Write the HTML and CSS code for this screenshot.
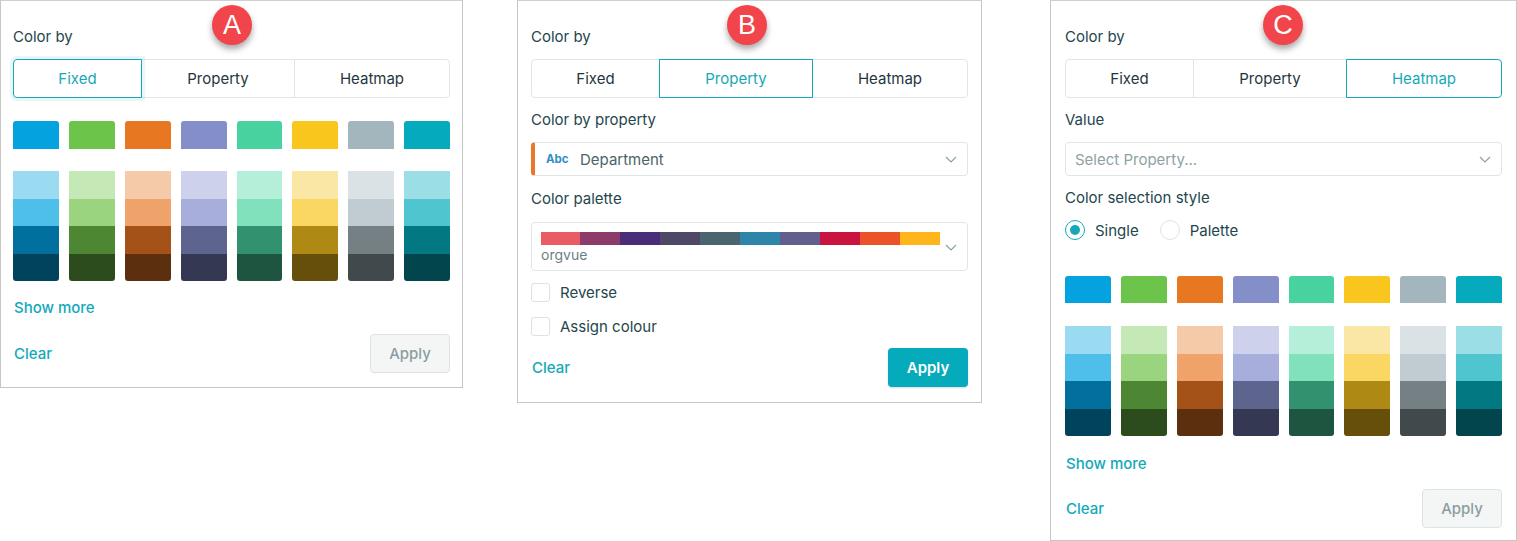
FILE: index.html
```html
<!DOCTYPE html>
<html lang="en">
<head>
<meta charset="utf-8">
<title>Color by</title>
<link rel="stylesheet" href="styles.css">
</head>
<body>
<div class="page">

  <section class="panel panel-a">
    <div class="badge">A</div>
    <div class="label">Color by</div>
    <div class="tabs">
      <div class="tab tab-first active focus">Fixed</div>
      <div class="tab">Property</div>
      <div class="tab tab-last">Heatmap</div>
    </div>
    <div class="swatch-top">
      <div class="sw" style="background:#04a3e0"></div>
      <div class="sw" style="background:#6dc44a"></div>
      <div class="sw" style="background:#e87721"></div>
      <div class="sw" style="background:#848fc9"></div>
      <div class="sw" style="background:#48d29f"></div>
      <div class="sw" style="background:#f8c61d"></div>
      <div class="sw" style="background:#a4b6bd"></div>
      <div class="sw" style="background:#05abbc"></div>
    </div>
    <div class="swatch-stacks">
      <div class="stack"><i style="background:#9bdbf2"></i><i style="background:#4ebfe8"></i><i style="background:#02709e"></i><i style="background:#01425c"></i></div>
      <div class="stack"><i style="background:#c5e8b7"></i><i style="background:#9bd47f"></i><i style="background:#4e8734"></i><i style="background:#2d4c1d"></i></div>
      <div class="stack"><i style="background:#f5caa9"></i><i style="background:#efa26a"></i><i style="background:#a45218"></i><i style="background:#5c2f0f"></i></div>
      <div class="stack"><i style="background:#cdd1eb"></i><i style="background:#a8aedb"></i><i style="background:#5d648e"></i><i style="background:#353853"></i></div>
      <div class="stack"><i style="background:#b5eed9"></i><i style="background:#80e1bc"></i><i style="background:#32926f"></i><i style="background:#1e5540"></i></div>
      <div class="stack"><i style="background:#fbe7a5"></i><i style="background:#fad663"></i><i style="background:#ae8a14"></i><i style="background:#654f0b"></i></div>
      <div class="stack"><i style="background:#dae2e5"></i><i style="background:#c0ccd1"></i><i style="background:#758085"></i><i style="background:#42494c"></i></div>
      <div class="stack"><i style="background:#9bdee5"></i><i style="background:#4fc5d0"></i><i style="background:#027883"></i><i style="background:#02454c"></i></div>
    </div>
    <div class="link more">Show more</div>
    <div class="footer">
      <span class="link">Clear</span>
      <div class="apply disabled">Apply</div>
    </div>
  </section>

  <section class="panel panel-b">
    <div class="badge">B</div>
    <div class="label">Color by</div>
    <div class="tabs">
      <div class="tab tab-first">Fixed</div>
      <div class="tab active">Property</div>
      <div class="tab tab-last">Heatmap</div>
    </div>
    <div class="label mt">Color by property</div>
    <div class="select select-prop">
      <span class="abc">Abc</span>
      <span class="select-text">Department</span>
      <svg class="chev" width="12" height="7" viewBox="0 0 12 7"><polyline points="1,1 6,6 11,1" fill="none" stroke="#8aa0a5" stroke-width="1.2"/></svg>
    </div>
    <div class="label mt2">Color palette</div>
    <div class="palette">
      <div class="palette-main">
        <div class="pbar">
          <i style="background:#e95c62"></i><i style="background:#8c3b6b"></i><i style="background:#4a2d7a"></i><i style="background:#504867"></i><i style="background:#4a6570"></i><i style="background:#2f84aa"></i><i style="background:#625f8f"></i><i style="background:#c8143f"></i><i style="background:#eb5228"></i><i style="background:#feb61c"></i>
        </div>
        <div class="pname">orgvue</div>
      </div>
      <svg class="chev" width="12" height="7" viewBox="0 0 12 7"><polyline points="1,1 6,6 11,1" fill="none" stroke="#8aa0a5" stroke-width="1.2"/></svg>
    </div>
    <div class="check first"><span class="box"></span><span>Reverse</span></div>
    <div class="check"><span class="box"></span><span>Assign colour</span></div>
    <div class="footer footer-b">
      <span class="link">Clear</span>
      <div class="apply primary">Apply</div>
    </div>
  </section>

  <section class="panel panel-c">
    <div class="badge">C</div>
    <div class="label">Color by</div>
    <div class="tabs">
      <div class="tab tab-first">Fixed</div>
      <div class="tab">Property</div>
      <div class="tab tab-last active">Heatmap</div>
    </div>
    <div class="label mt">Value</div>
    <div class="select">
      <span class="placeholder">Select Property...</span>
      <svg class="chev" width="12" height="7" viewBox="0 0 12 7"><polyline points="1,1 6,6 11,1" fill="none" stroke="#8aa0a5" stroke-width="1.2"/></svg>
    </div>
    <div class="label mt">Color selection style</div>
    <div class="radios">
      <div class="radio-item"><span class="radio on"></span><span>Single</span></div>
      <div class="radio-item"><span class="radio"></span><span>Palette</span></div>
    </div>
    <div class="swatch-top top-c">
      <div class="sw" style="background:#04a3e0"></div>
      <div class="sw" style="background:#6dc44a"></div>
      <div class="sw" style="background:#e87721"></div>
      <div class="sw" style="background:#848fc9"></div>
      <div class="sw" style="background:#48d29f"></div>
      <div class="sw" style="background:#f8c61d"></div>
      <div class="sw" style="background:#a4b6bd"></div>
      <div class="sw" style="background:#05abbc"></div>
    </div>
    <div class="swatch-stacks">
      <div class="stack"><i style="background:#9bdbf2"></i><i style="background:#4ebfe8"></i><i style="background:#02709e"></i><i style="background:#01425c"></i></div>
      <div class="stack"><i style="background:#c5e8b7"></i><i style="background:#9bd47f"></i><i style="background:#4e8734"></i><i style="background:#2d4c1d"></i></div>
      <div class="stack"><i style="background:#f5caa9"></i><i style="background:#efa26a"></i><i style="background:#a45218"></i><i style="background:#5c2f0f"></i></div>
      <div class="stack"><i style="background:#cdd1eb"></i><i style="background:#a8aedb"></i><i style="background:#5d648e"></i><i style="background:#353853"></i></div>
      <div class="stack"><i style="background:#b5eed9"></i><i style="background:#80e1bc"></i><i style="background:#32926f"></i><i style="background:#1e5540"></i></div>
      <div class="stack"><i style="background:#fbe7a5"></i><i style="background:#fad663"></i><i style="background:#ae8a14"></i><i style="background:#654f0b"></i></div>
      <div class="stack"><i style="background:#dae2e5"></i><i style="background:#c0ccd1"></i><i style="background:#758085"></i><i style="background:#42494c"></i></div>
      <div class="stack"><i style="background:#9bdee5"></i><i style="background:#4fc5d0"></i><i style="background:#027883"></i><i style="background:#02454c"></i></div>
    </div>
    <div class="link more more-c">Show more</div>
    <div class="footer footer-c">
      <span class="link">Clear</span>
      <div class="apply disabled">Apply</div>
    </div>
  </section>

</div>
</body>
</html>
```

FILE: styles.css
```css
* { box-sizing: border-box; }

html, body {
  margin: 0;
  padding: 0;
  background: #ffffff;
}

body {
  font-family: Inter, "Noto Sans", "Liberation Sans", sans-serif;
  font-size: 15px;
  color: #24464c;
}

.page {
  display: flex;
  align-items: flex-start;
}

.panel {
  position: relative;
  border: 1px solid #c6c6c6;
  border-top-color: #d0d0d0;
  padding: 26px 12px 14px 12px;
  background: #fff;
}

.panel-a { width: 463px; }
.panel-b { width: 465px; margin-left: 54px; padding-left: 13px; padding-right: 13px; padding-bottom: 15px; }
.panel-c { width: 467px; margin-left: 68px; padding-left: 14px; padding-right: 14px; padding-bottom: 12px; }

.badge {
  position: absolute;
  top: 4px;
  left: 211px;
  width: 40px;
  height: 40px;
  border-radius: 50%;
  background: #f2454b;
  color: #fff;
  font-family: "Liberation Sans", Arial, sans-serif;
  font-size: 27px;
  line-height: 40px;
  text-align: center;
  box-shadow: 0 4px 6px rgba(0, 0, 0, 0.35);
}
.panel-b .badge { left: 209px; }
.panel-c .badge { left: 212px; top: 4px; }

.label {
  height: 20px;
  line-height: 20px;
  margin-bottom: 12px;
}
.label.mt { margin-top: 12px; }
.label.mt2 { margin-top: 13px; margin-bottom: 13px; }

.tabs {
  display: grid;
  grid-template-columns: 129px 153px 1fr;
  height: 39px;
}

.tab {
  display: flex;
  align-items: center;
  justify-content: center;
  border: 1px solid #e0e6e7;
  margin-left: -1px;
  color: #1f363c;
  position: relative;
}
.tab-first { margin-left: 0; border-radius: 4px 0 0 4px; }
.tab-last { border-radius: 0 4px 4px 0; }
.tab.active {
  border-color: #17a8b8;
  color: #17a8b8;
  z-index: 1;
}
.tab.focus {
  box-shadow: 0 0 0 3px rgba(23, 168, 184, 0.10);
}

.swatch-top {
  display: grid;
  grid-template-columns: repeat(8, 1fr);
  column-gap: 10px;
  margin-top: 23px;
  height: 28px;
}
.swatch-top.top-c { margin-top: 36px; height: 27px; }
.sw { border-radius: 3px 3px 0 0; }

.swatch-stacks {
  display: grid;
  grid-template-columns: repeat(8, 1fr);
  column-gap: 10px;
  margin-top: 22px;
  height: 110px;
}
.top-c + .swatch-stacks { margin-top: 23px; }

.stack {
  display: grid;
  grid-template-rows: repeat(4, 1fr);
  border-radius: 0 0 3px 3px;
  overflow: hidden;
}
.stack i { display: block; }

.link {
  color: #12a9ba;
  font-weight: 500;
  line-height: 20px;
}
.more { margin-top: 17px; padding-left: 1px; }
.more.more-c { margin-top: 18px; }

.footer {
  display: flex;
  justify-content: space-between;
  align-items: center;
  margin-top: 16px;
}
.footer .link { padding-left: 1px; }
.footer-b { margin-top: 12px; }
.footer-c { margin-top: 15px; }

.apply {
  width: 80px;
  height: 39px;
  border-radius: 4px;
  display: flex;
  align-items: center;
  justify-content: center;
  font-weight: 500;
}
.apply.disabled {
  background: #f4f6f6;
  border: 1px solid #dce3e4;
  color: #8c9da1;
}
.apply.primary {
  background: #05aabb;
  color: #fff;
  font-weight: 600;
  box-shadow: 0 1px 2px rgba(0, 0, 0, 0.15);
}

.select {
  height: 34px;
  border: 1px solid #e0e6e7;
  border-radius: 4px;
  display: flex;
  align-items: center;
  padding: 0 10px 0 9px;
}
.select-prop {
  border-left: 4px solid #e8772a;
  padding-left: 11px;
}
.abc {
  font-size: 11.5px;
  font-weight: 700;
  color: #2b8fc3;
  width: 34px;
}
.select-text { color: #4c6468; flex: 1; }
.placeholder { color: #8fa1a5; flex: 1; }
.chev { margin-left: auto; }

.palette {
  height: 49px;
  border: 1px solid #e0e6e7;
  border-radius: 4px;
  display: flex;
  align-items: center;
  padding: 0 10px 0 9px;
}
.palette-main {
  align-self: flex-start;
  padding-top: 9px;
}
.pbar {
  display: flex;
  width: 399px;
  height: 13px;
}
.pbar i { display: block; flex: 1; }
.pbar i:first-child { flex: 0 0 39px; }
.pname {
  font-size: 14px;
  color: #6a7f84;
  line-height: 20px;
}
.palette .chev { margin-top: 2px; }

.check {
  display: flex;
  align-items: center;
  gap: 10px;
  height: 20px;
  margin-top: 14px;
}
.check.first { margin-top: 11px; }
.box {
  width: 19px;
  height: 19px;
  border: 1px solid #dce3e5;
  border-radius: 3px;
}

.radios {
  display: flex;
  align-items: center;
  gap: 21px;
  height: 20px;
  margin-top: 1px;
}
.radio-item {
  display: flex;
  align-items: center;
  gap: 10px;
}
.radio {
  width: 20px;
  height: 20px;
  border-radius: 50%;
  border: 1px solid #dce4e6;
  position: relative;
}
.radio.on {
  border: 1.5px solid #17a8b8;
}
.radio.on::after {
  content: "";
  position: absolute;
  left: 50%;
  top: 50%;
  width: 10px;
  height: 10px;
  margin: -5px 0 0 -5px;
  border-radius: 50%;
  background: #17a8b8;
}
```
